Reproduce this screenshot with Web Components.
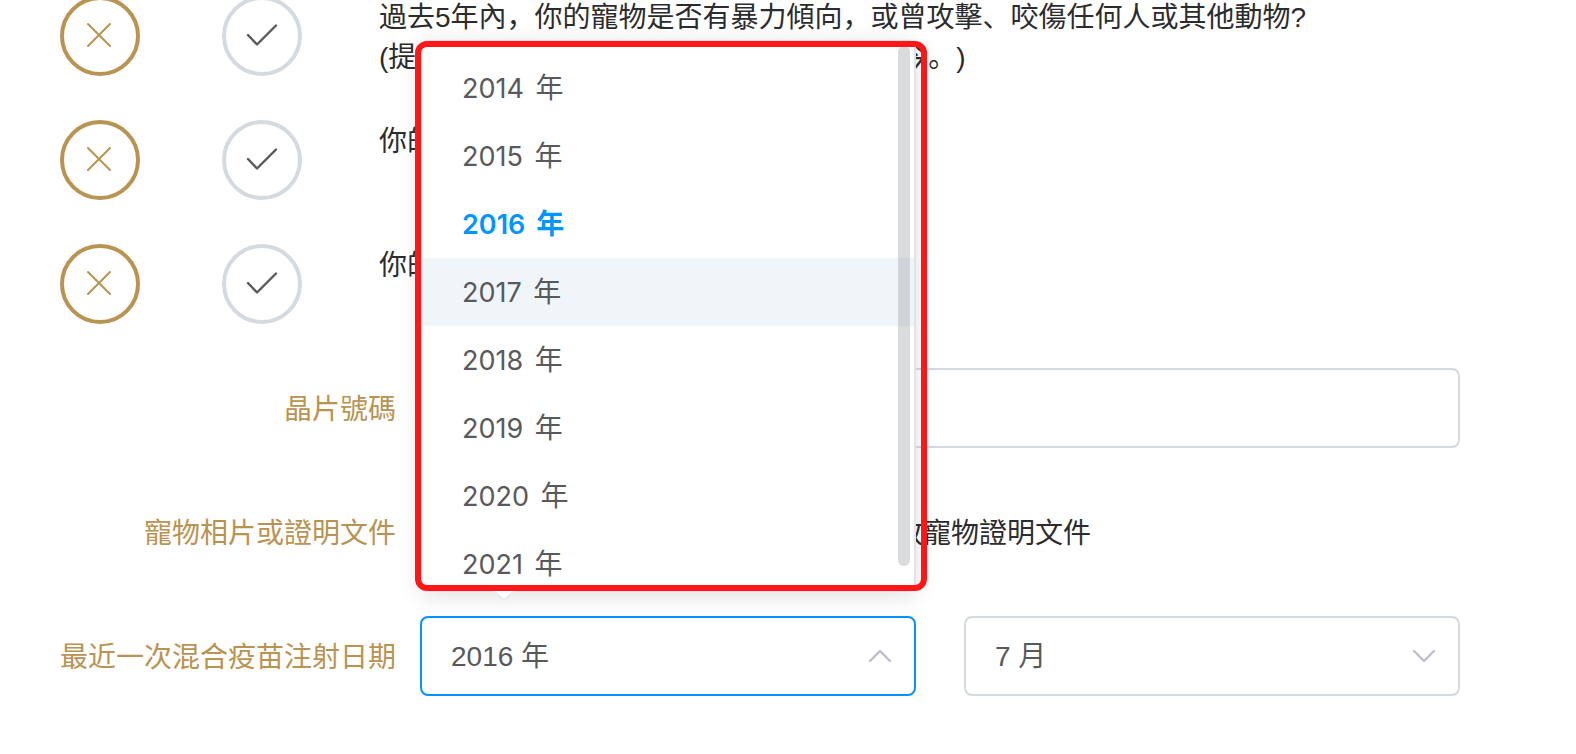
<!DOCTYPE html>
<html lang="zh-CN">
<head>
<meta charset="utf-8">
<meta name="viewport" content="width=device-width, initial-scale=1">
<title>寵物投保資料</title>
<style>
  :root {
    --gold: #b99351;
    --line: #d5dae1;
    --blue: #0095ff;
    --text: #2c2c2e;
    --muted: #58595d;
  }
  html, body { margin: 0; background: #fff; }
  body {
    overflow: hidden;
    color: var(--text);
    font: 28px/40px "Liberation Sans", "Noto Sans CJK SC", sans-serif;
    text-spacing-trim: space-all;
  }
</style>
</head>
<body>
<pet-form></pet-form>

<script>
const define = (name, html, setup) => customElements.define(name, class extends HTMLElement {
  connectedCallback() {
    if (this.shadowRoot) return;
    const t = document.createElement('template');
    t.innerHTML = html;
    this.attachShadow({ mode: 'open' }).append(t.content.cloneNode(true));
    if (setup) setup(this, this.shadowRoot);
  }
});

/* One health question: a no/yes pair of round radios and the question text. */
define('yes-no-question', `
  <style>
    :host { display: flex; align-items: flex-start; height: 80px; }
    .pair { display: flex; flex: none; gap: 82px; margin-right: 77px; }
    label { display: grid; width: 80px; height: 80px; color: var(--muted); }
    label > * { grid-area: 1 / 1; }
    input {
      appearance: none; margin: 0; width: 80px; height: 80px; box-sizing: border-box;
      border: 4px solid var(--line); border-radius: 50%;
    }
    input:checked { border-color: var(--gold); }
    label:has(input:checked) { color: var(--gold); }
    svg { width: 80px; height: 80px; fill: none; stroke: currentColor; stroke-linecap: round; stroke-linejoin: round; }
    .text { flex: 1; min-width: 0; padding-top: 2px; white-space: nowrap; }
  </style>
  <div class="pair">
    <label aria-label="否"><input type="radio" name="answer" checked>
      <svg viewBox="0 0 80 80" stroke-width="2"><path d="M28 28 50 50M50 28 28 50"/></svg></label>
    <label aria-label="是"><input type="radio" name="answer">
      <svg viewBox="0 0 80 80" stroke-width="2.4"><path d="M26 39 35 48.500 54 29.500"/></svg></label>
  </div>
  <div class="text"><slot></slot></div>
`);

/* A form row: gold label at the left, controls at the right. */
define('form-row', `
  <style>
    :host { display: grid; grid-template-columns: 336px minmax(0, 1fr); column-gap: 24px; align-items: center; height: 80px; }
    .label { padding-top: 4px; color: var(--gold); text-align: right; white-space: nowrap; }
    .body { display: flex; gap: 48px; }
  </style>
  <div class="label"></div>
  <div class="body"><slot></slot></div>
`, (host, root) => { root.querySelector('.label').textContent = host.getAttribute('label'); });

define('text-field', `
  <style>
    :host { display: block; flex: 1; }
    input {
      display: block; box-sizing: border-box; width: 100%; height: 80px; padding: 0 30px;
      border: 2px solid var(--line); border-radius: 8px; outline: 0; font: inherit; color: var(--muted);
    }
  </style>
  <input type="text">
`, (host, root) => root.querySelector('input').setAttribute('aria-label', host.getAttribute('label')));

define('select-box', `
  <style>
    :host { display: grid; flex: 1; position: relative; align-items: center; }
    select {
      grid-area: 1 / 1; appearance: none; box-sizing: border-box; width: 100%; height: 80px; padding: 2px 29px 0;
      border: 2px solid var(--line); border-radius: 8px; background: #fff; outline: 0;
      font: inherit; color: var(--muted);
    }
    :host([open]) select { border-color: var(--blue); }
    svg { grid-area: 1 / 1; justify-self: end; margin-right: 24px; width: 24px; height: 24px; pointer-events: none;
      fill: none; stroke: #b4bac5; stroke-width: 2; stroke-linecap: round; stroke-linejoin: round; }
    :host([open]) svg { transform: rotate(180deg); }
  </style>
  <select><option></option></select>
  <svg viewBox="0 0 24 24"><path d="M2 7 12 17 22 7"/></svg>
  <slot></slot>
`, (host, root) => {
  root.querySelector('option').textContent = host.getAttribute('value');
  root.querySelector('select').setAttribute('aria-label', host.getAttribute('label'));
});

/* The open list over the year select, with its scroll thumb, pointer and red highlight frame. */
define('year-menu', `
  <style>
    :host { position: absolute; z-index: 2; left: 0; right: 0; bottom: calc(100% + 24px); height: 552px; }
    .panel {
      height: 100%; box-sizing: border-box; overflow: hidden; padding-top: 12px;
      border: 2px solid #dfe4ea; border-radius: 8px; background: #fff;
      box-shadow: 0 4px 24px rgba(0, 0, 0, .12);
    }
    ul { margin: 0; padding: 0; list-style: none; }
    .thumb { position: absolute; top: 6px; right: 6px; width: 12px; height: 520px; border-radius: 6px; background: rgba(144, 147, 153, .33); }
    .pointer { position: absolute; left: 72px; bottom: -10px; width: 24px; height: 12px; }
    .frame { position: absolute; inset: 1px -11px 1px -5px; border: 6px solid #ff1717; border-radius: 12px; pointer-events: none; }
  </style>
  <div class="panel"><ul role="listbox" aria-label="年份"><slot></slot></ul></div>
  <div class="thumb"></div>
  <svg class="pointer" viewBox="0 0 24 12"><path d="M0 0 12 10 24 0" fill="#fff" stroke="#e6ebf2" stroke-width="2"/></svg>
  <div class="frame"></div>
`);

define('year-option', `
  <style>
    :host { display: block; }
    li { list-style: none; height: 68px; padding: 0 40px; color: var(--muted);
      font: 27px/68px Inter, "Noto Sans CJK SC", sans-serif; }
    .unit { margin-left: 4px; font-size: 28px; }
    :host([hovered]) li { background: #f0f5f9; }
    :host([selected]) li { color: var(--blue); font-weight: 600; }
  </style>
  <li role="option"><slot></slot> <span class="unit">年</span></li>
`);

define('pet-form', `
  <style>
    :host { display: flex; flex-direction: column; gap: 44px; margin-top: -4px; padding: 0 116px 0 60px; }
    .tail { display: flex; }
    .tail .end { margin-left: 484px; }
    .note { margin-left: 475px; padding-top: 4px; white-space: nowrap; }
  </style>
  <yes-no-question>
    過去5年內，你的寵物是否有暴力傾向，或曾攻擊、咬傷任何人或其他動物?
    <div class="tail"><span>(提</span><span class="end">今。)</span></div>
  </yes-no-question>
  <yes-no-question>你的</yes-no-question>
  <yes-no-question>你的</yes-no-question>
  <form-row label="晶片號碼"><text-field label="晶片號碼"></text-field></form-row>
  <form-row label="寵物相片或證明文件"><span class="note">放寵物證明文件</span></form-row>
  <form-row label="最近一次混合疫苗注射日期">
    <select-box open value="2016 年" label="年">
      <year-menu>
        <year-option>2014</year-option>
        <year-option>2015</year-option>
        <year-option selected>2016</year-option>
        <year-option hovered>2017</year-option>
        <year-option>2018</year-option>
        <year-option>2019</year-option>
        <year-option>2020</year-option>
        <year-option>2021</year-option>
      </year-menu>
    </select-box>
    <select-box value="7 月" label="月"></select-box>
  </form-row>
`);
</script>
</body>
</html>
